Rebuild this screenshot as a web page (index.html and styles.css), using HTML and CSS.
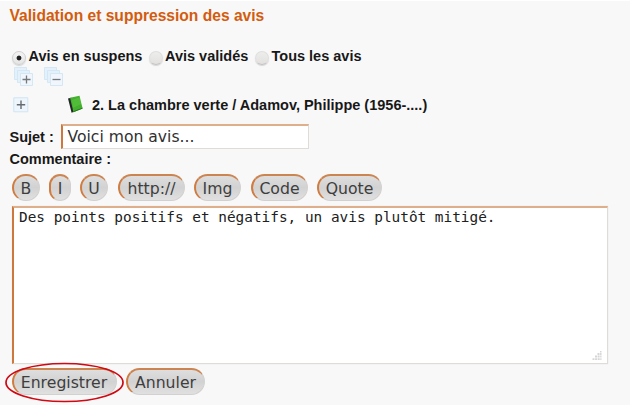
FILE: index.html
```html
<!DOCTYPE html>
<html lang="fr">
<head>
<meta charset="utf-8">
<title>Validation des avis</title>
<link rel="stylesheet" href="styles.css">
</head>
<body>
<main class="page">
  <h1 class="title">Validation et suppression des avis</h1>
  <div class="filters">
    <label class="filter first"><i class="radio on"></i><span>Avis en suspens</span></label>
    <label class="filter second"><i class="radio"></i><span>Avis validés</span></label>
    <label class="filter"><i class="radio"></i><span>Tous les avis</span></label>
  </div>
  <div class="tree-tools">
    <svg width="21" height="21" viewBox="0 0 21 21"><g fill="#e4f1fa" stroke="#d3e7f4"><path d="M1.500 1.500h12v12h-12z"/><path d="M4.500 4.500h12v12h-12z"/><path fill="#f0f6fb" d="M7.500 7.500h12v12h-12z"/></g><path d="M9.500 13.500h8M13.500 9.500v8" stroke="#74797e" stroke-width="1.300"/></svg>
    <svg width="21" height="21" viewBox="0 0 21 21"><g fill="#e4f1fa" stroke="#d3e7f4"><path d="M1.500 1.500h12v12h-12z"/><path d="M4.500 4.500h12v12h-12z"/><path fill="#f0f6fb" d="M7.500 7.500h12v12h-12z"/></g><path d="M9.500 13.500h8" stroke="#74797e" stroke-width="1.300"/></svg>
  </div>
  <div class="record">
    <svg class="expand" width="16" height="16" viewBox="0 0 16 16"><path d="M.8.8h14v14h-14z" fill="#eff6fb" stroke="#cfe4f2"/><path d="M3.800 7.700h8.400M8 3.500v8.400" stroke="#666b70" stroke-width="1.400"/></svg>
    <svg class="book" width="17" height="19" viewBox="0 0 17 19"><path d="M1 3.500 4.300 2.800 7 16.800 4.600 17.800Z" fill="#24252a"/><path d="M3 2.800 12.500.8 15.600 13.600 6.500 17.200Z" fill="#43b02e"/><path d="M5 5 12.500 2.200 14 9 6 13Z" fill="#5bc540" opacity=".6"/><path d="M6.300 16.700 15.500 13.200" stroke="#25781e"/></svg>
    <span>2. La chambre verte / Adamov, Philippe (1956-....)</span>
  </div>
  <div class="subject"><span class="subject-label">Sujet :</span><div class="input"><span>Voici mon avis...</span></div></div>
  <div class="comment-label"><span>Commentaire :</span></div>
  <div class="toolbar">
    <button class="btn b">B</button><button class="btn i">I</button><button class="btn u">U</button><button class="btn url">http://</button><button class="btn img">Img</button><button class="btn code">Code</button><button class="btn quote">Quote</button>
  </div>
  <div class="textarea"><span>Des points positifs et négatifs, un avis plutôt mitigé.</span>
    <svg class="grip" width="10" height="10" viewBox="0 0 10 10"><path d="M8 .5h1.500M5.500 3h4M3 5.500h6.500M.5 8.200h9" stroke="#d6d6d6" stroke-width="1.800" stroke-dasharray="2 .6"/></svg>
  </div>
  <div class="actions">
    <button class="btn save">Enregistrer</button><button class="btn cancel">Annuler</button>
    <svg class="ring" width="120" height="42" viewBox="0 0 120 42"><ellipse cx="60.500" cy="20.500" rx="58.500" ry="19" fill="none" stroke="#cf0813" stroke-width="1.700"/></svg>
  </div>
</main>
</body>
</html>
```
FILE: styles.css
```css
* { box-sizing: border-box; }
body { margin: 0; background: #f8f8f8; }
.page {
  width: 630px; height: 405px; overflow: hidden;
  border-top: 1px solid #fff;
  font: bold 14.5px/18px "Liberation Sans", sans-serif;
  color: #181818; white-space: nowrap;
}
svg { display: block; flex: none; }
.title { margin: 6px 0 0 9.5px; height: 40px; font-size: 15.6px; line-height: 18px; color: #d35c0f; }
.filters { display: flex; height: 19px; margin-left: 12px; }
.filter { display: flex; gap: 2.5px; }
.filter.first { width: 136.5px; }
.filter.second { width: 106.5px; }
.radio {
  width: 14px; height: 14px; margin-top: 4px; flex: none; border-radius: 50%;
  background: linear-gradient(#ededeb, #e2e1df);
  border: 1px solid #e0dfdd; border-bottom-color: #c2c2c0;
  box-shadow: 0 1px 1px #d4d4d4;
}
.radio.on { background: radial-gradient(circle, #222 0 2px, transparent 2.8px), linear-gradient(#f4f4f4, #e5e5e5); border-color: #d0d0d0; }
.tree-tools { display: flex; gap: 9.5px; height: 29px; padding-left: 12.5px; }
.record { display: flex; height: 29px; padding-left: 13px; }
.expand { margin-top: 2px; }
.book { margin: 0 8px 0 38px; }
.record span { margin-top: 1px; }
.subject { display: flex; height: 26px; padding-left: 9.5px; }
.subject-label { width: 51.5px; padding-top: 4px; }
.input {
  width: 248px; height: 25px; background: #fff; color: #303030;
  border: 1px solid #dedbd8; border-top: 2px solid #dfae8b; border-left: 2px solid #cd783c;
  font: 15.6px/22px "DejaVu Sans", sans-serif; padding-left: 4.5px;
}
.comment-label { height: 24px; padding-left: 9.5px; }
.toolbar { display: flex; height: 32px; padding-left: 12px; }
.btn {
  height: 27px; padding: 0 1px 0 0; border-radius: 14px;
  border: 1px solid #d3d1cf; border-top: 2px solid #cc8450; border-left: 2px solid #d07b3f;
  background: linear-gradient(#dedede, #d2d2d2 48%, #e0e0e0);
  font: 15.7px/23px "DejaVu Sans", sans-serif; color: #3e3e3e; text-align: center; white-space: nowrap;
}
.b { width: 28px; margin-right: 9px; }
.i { width: 22px; margin-right: 9px; }
.u { width: 28px; margin-right: 10px; }
.url { width: 67px; margin-right: 9px; }
.img { width: 47px; margin-right: 10px; }
.code { width: 57px; margin-right: 9px; }
.quote { width: 65px; }
.textarea {
  position: relative; width: 596px; height: 158px; margin-left: 12px; background: #fff; color: #202020;
  border: 1px solid #dedbd8; border-top: 2px solid #dfae8b; border-left: 2px solid #cd783c;
  box-shadow: 0 0 1px #ddd;
  font: 14.4px/19px "DejaVu Sans Mono", monospace; padding-left: 5px;
}
.grip { position: absolute; right: 5px; bottom: 2px; }
.actions { position: relative; display: flex; gap: 9px; padding: 4px 0 0 12px; }
.save { width: 105px; padding-right: 2px; }
.cancel { width: 79px; }
.ring { position: absolute; left: 4px; top: -2px; }
```
